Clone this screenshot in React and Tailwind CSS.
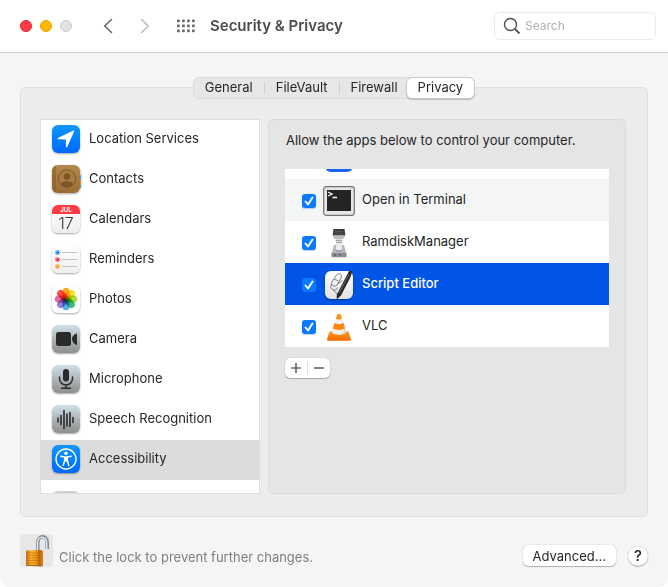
import React from "react";

const tile = "h-7 w-7 shrink-0 rounded-[6px] shadow-[0_1px_2px_rgba(0,0,0,0.35)]";
const blueTile = "bg-linear-to-b from-[#1496ff] to-[#0068ff]";
const grayTile = "bg-linear-to-b from-[#cfe0e8] to-[#8e8e8e]";

function LocationIcon() {
  return (
    <svg viewBox="0 0 28 28" className={`${tile} ${blueTile}`} aria-hidden="true">
      <path d="M22 6.700 15.300 21.800c-.4.900-1.400.8-1.400-.2l-.1-7.200-7.400-.2c-1-.1-1.100-1.100-.2-1.500L21 5.700c.7-.3 1.200.3 1 1Z" fill="#fff" />
    </svg>
  );
}

function ContactsIcon() {
  return (
    <svg viewBox="0 0 29 28" className="-mr-px h-7 w-[29px] shrink-0 drop-shadow-[0_1px_1px_rgba(0,0,0,0.35)]" aria-hidden="true">
      <defs>
        <linearGradient id="leather" x1="0" y1="0" x2="0" y2="1">
          <stop offset="0" stopColor="#b38a4c" />
          <stop offset="1" stopColor="#9c6b34" />
        </linearGradient>
      </defs>
      <rect x="24" y="5" width="5" height="5" rx="1" fill="#d9d9d9" />
      <rect x="24" y="10" width="5" height="5" fill="#27b4f0" />
      <rect x="24" y="15" width="5" height="4" fill="#ff8b17" />
      <rect x="24" y="19" width="5" height="4" rx="1" fill="#26c759" />
      <rect width="28" height="28" rx="6" fill="url(#leather)" />
      <path d="M4 .4A6 6 0 0 0 0 6v16a6 6 0 0 0 4 5.600Z" fill="#7a4e20" opacity=".4" />
      <circle cx="15" cy="13.500" r="8.700" fill="#a97b40" stroke="#7c5427" strokeWidth=".9" />
      <circle cx="15" cy="11.500" r="3.300" fill="#7c5427" />
      <path d="M8.600 19.400c1-2.300 3.500-3.200 6.400-3.200s5.400.9 6.400 3.200a8.700 8.700 0 0 1-12.800 0Z" fill="#7c5427" />
    </svg>
  );
}

function CalendarIcon() {
  return (
    <span className={`${tile} flex flex-col items-center overflow-hidden bg-linear-to-b from-white to-[#eeeeee]`} aria-hidden="true">
      <span className="h-[9px] w-full bg-[#fb3c44] text-center text-[6px] leading-[9px] font-bold text-white">JUL</span>
      <span className="text-[16px] leading-[19px] font-light text-[#333]">17</span>
    </span>
  );
}

function RemindersIcon() {
  const rows = [["#0a7cf5", 7.5], ["#f9223c", 14.5], ["#fb9712", 21.5]];
  return (
    <svg viewBox="0 0 28 28" className={`${tile} bg-linear-to-b from-white to-[#f1efed]`} aria-hidden="true">
      {rows.map(([color, y]) => (
        <g key={color}>
          <circle cx="5.500" cy={y} r="1.500" fill={color} />
          <circle cx="5.500" cy={y} r="2.300" fill="none" stroke={color} strokeWidth=".8" opacity=".6" />
          <path d={`M10 ${y}h15`} stroke="#c4c4c4" strokeWidth="1" />
        </g>
      ))}
    </svg>
  );
}

function PhotosIcon() {
  const petals = ["#fb9a0a", "#f5e100", "#a8d51c", "#27b673", "#3fa4e8", "#8f6fc8", "#dd5ba0", "#fb3b30"];
  return (
    <svg viewBox="0 0 28 28" className={`${tile} bg-white`} aria-hidden="true">
      {petals.map((color, i) => (
        <rect key={color} x="10.500" y="2.800" width="7" height="11.200" rx="3.500" fill={color} opacity=".9" transform={`rotate(${i * 45} 14 14)`} className="mix-blend-multiply" />
      ))}
    </svg>
  );
}

function CameraIcon() {
  return (
    <svg viewBox="0 0 28 28" className={`${tile} ${grayTile}`} aria-hidden="true">
      <rect x="4" y="7" width="15" height="14" rx="2.500" fill="#2b2b2b" />
      <path d="M20 14c0-2.500 2.200-5 5-5.500v11.500c-2.800-.5-5-3.500-5-6Z" fill="#2b2b2b" />
    </svg>
  );
}

function MicrophoneIcon() {
  return (
    <svg viewBox="0 0 28 28" className={`${tile} ${grayTile}`} aria-hidden="true">
      <rect x="11" y="4" width="6" height="12.500" rx="3" fill="#2b2b2b" />
      <path d="M7.500 12v1.500a6.500 6.500 0 0 0 13 0V12M14 20v3M9.500 23.300h9" fill="none" stroke="#2b2b2b" strokeWidth="1.500" strokeLinecap="round" />
    </svg>
  );
}

function SpeechIcon() {
  return (
    <svg viewBox="0 0 28 28" className={`${tile} ${grayTile}`} aria-hidden="true">
      <path d="M6 13v4M9 10.500v9M12 5.500v18M15 9v12M18 7.500v14M21 12.500v5" stroke="#2b2b2b" strokeWidth="1.600" strokeLinecap="round" />
    </svg>
  );
}

function AccessibilityIcon() {
  return (
    <svg viewBox="0 0 28 28" className={`${tile} ${blueTile}`} aria-hidden="true">
      <circle cx="14" cy="14" r="10" fill="none" stroke="#fff" strokeWidth="1.400" />
      <circle cx="14" cy="8.300" r="1.700" fill="#fff" />
      <path d="M8.800 11.300 12.700 12v3.200L11.200 20.500M19.200 11.300l-3.900.7v3.200l1.500 5.300" fill="none" stroke="#fff" strokeWidth="1.500" strokeLinecap="round" strokeLinejoin="round" />
      <path d="M12.200 11.600h3.600v4.800h-3.600Z" fill="#fff" />
    </svg>
  );
}

function TerminalIcon() {
  return (
    <svg viewBox="0 0 32 30" className="h-[30px] w-8" aria-hidden="true">
      <rect x=".7" y=".7" width="30.600" height="28.600" rx="2.500" fill="#e6e8e7" stroke="#707472" strokeWidth="1.200" />
      <rect x="4" y="4" width="24" height="21" fill="#242424" />
      <path d="m5 6 4 2-4 2M9.500 11.500H14" fill="none" stroke="#fff" strokeWidth="1.300" />
    </svg>
  );
}

function RamdiskIcon() {
  return (
    <svg viewBox="0 0 16 30" className="h-[30px] w-4" aria-hidden="true">
      <path d="M2.500 1h11l.9 6.500H1.600Z" fill="#3a3b3d" />
      <path d="M4 3.500h8M3.700 5.300h8.600" stroke="#66686a" strokeWidth=".7" />
      <path d="M1.600 7.500h12.800L12.500 11h-9Z" fill="#bcbcc0" />
      <path d="M5 11h6v5H5Z" fill="#dcdcdf" />
      <path d="M4.800 12.500h6.400M5 14.500h6" stroke="#98989e" strokeWidth=".8" />
      <path d="M3 17h10l2.500 9H.5Z" fill="#b5b5bb" />
      <path d="M5.500 15h5l1 7.500h-7Z" fill="#ececf0" />
      <path d="M4.500 21.500q3.500 3.500 7 0" fill="none" stroke="#85858e" strokeWidth="1" />
      <rect x=".5" y="25" width="15" height="4.200" rx=".6" fill="#8d8d94" />
      <path d="M3 27h2M8 27h2" stroke="#4a4a55" strokeWidth="1.200" />
    </svg>
  );
}

function ScriptEditorIcon() {
  return (
    <svg viewBox="0 0 28 28" className={`${tile} overflow-visible bg-linear-to-b from-white to-[#e2e2e2]`} aria-hidden="true">
      <path d="M11.500 4q1.500-2 4-1 1.500 1.500.5 4l-4 7q-1 1.500-3 1l-2-1q-1.500-1 0-3ZM9 8l4.500 2M7 13l-1.200 2q-.8 2.500 2 3.500l2 .5q2.200 0 2.700-2.500M12.500 13l5-3.500M8 19l4 3.500" fill="none" stroke="#666" strokeWidth=".8" />
      <path d="m23.300 1.600 2-2 2 1L25.500 6 16 24.500 11.700 28.600 11.800 23.500Z" fill="#25282a" />
      <path d="m24 3.500-10 18.500" stroke="#7d8184" strokeWidth=".8" />
    </svg>
  );
}

function VlcIcon() {
  return (
    <svg viewBox="0 0 28 32" className="h-[30px] w-[26px]" aria-hidden="true">
      <defs>
        <linearGradient id="cone" x1="0" y1="0" x2="0" y2="1">
          <stop offset="0" stopColor="#ff9a1c" />
          <stop offset="1" stopColor="#f56a00" />
        </linearGradient>
      </defs>
      <path d="M5 20.500h18q1 0 1.400 1l2.500 8q.3 1.200-1 1.200H2q-1.300 0-1-1.200l2.600-8q.4-1 1.400-1Z" fill="url(#cone)" />
      <path d="M12 3q2-2.500 4 0l6 18.500q-1.500 3-8 3t-8-3Z" fill="#f0f0f0" />
      <path d="M12 3q2-2.500 4 0l1.300 4q-3.300 1.600-6.600 0Z" fill="#ff920f" />
      <path d="M9.200 11.800q4.800 2.400 9.600 0l1.900 5.700q-6.700 3.200-13.400 0Z" fill="#ff8706" />
      <path d="M17 7.500 22 21.500q-1.500 3-8 3 5-1 5-4Z" fill="#a9b4bb" opacity=".35" />
    </svg>
  );
}

function LockIcon() {
  return (
    <svg viewBox="0 0 33 33" className="h-[33px] w-[33px]" aria-hidden="true">
      <defs>
        <linearGradient id="brass" x1="0" y1="0" x2="1" y2="0">
          <stop offset="0" stopColor="#c76f0e" />
          <stop offset=".3" stopColor="#ffb52e" />
          <stop offset=".68" stopColor="#e98c0b" />
          <stop offset=".74" stopColor="#b86408" />
          <stop offset="1" stopColor="#dc8410" />
        </linearGradient>
      </defs>
      <path d="M17.800 17V9c0-8 9.400-8.500 9.400 0v6" fill="none" stroke="#7f8d99" strokeWidth="3.600" />
      <path d="M17.500 17V9c0-7.500 9.200-8 9.200 0v6" fill="none" stroke="#dfe7ed" strokeWidth="1.500" />
      <path d="M6 16.500 21 16l2 1v13.500L21 32 6 31.500Z" fill="url(#brass)" />
      <path d="M6 19h15M6 21.500h15M6 24h15M6 26.500h15M6 29h15" stroke="#a85d07" strokeWidth=".7" opacity=".65" />
      <path d="M6 31.200 21 32l2-1.200" fill="none" stroke="#8e4705" strokeWidth=".8" />
    </svg>
  );
}

const categories = [
  ["Location Services", LocationIcon],
  ["Contacts", ContactsIcon],
  ["Calendars", CalendarIcon],
  ["Reminders", RemindersIcon],
  ["Photos", PhotosIcon],
  ["Camera", CameraIcon],
  ["Microphone", MicrophoneIcon],
  ["Speech Recognition", SpeechIcon],
  ["Accessibility", AccessibilityIcon],
];

const apps = [
  ["Open in Terminal", TerminalIcon, "bg-[#f4f5f5]"],
  ["RamdiskManager", RamdiskIcon, "bg-white"],
  ["Script Editor", ScriptEditorIcon, "bg-[#0054e6] font-medium text-white"],
  ["VLC", VlcIcon, "bg-white"],
];

function AppRow({ name, Icon, style }) {
  return (
    <li className={style}>
      <label className="flex h-[42px] items-center pt-0.5 pl-[17px]">
        <span className="grid h-3.5 w-3.5 shrink-0 place-items-center">
          <input type="checkbox" defaultChecked className="peer col-start-1 row-start-1 h-3.5 w-3.5 appearance-none rounded-[3px] border border-[#bbb] bg-white shadow-[0_1px_1px_rgba(0,80,220,0.25)] checked:border-0 checked:bg-[#0a7aff]" />
          <svg viewBox="0 0 14 14" className="pointer-events-none z-10 col-start-1 row-start-1 hidden h-3.5 w-3.5 peer-checked:block" aria-hidden="true">
            <path d="m3.500 7.500 2.500 3 4.500-7" fill="none" stroke="#fff" strokeWidth="1.900" strokeLinecap="round" strokeLinejoin="round" />
          </svg>
        </span>
        <span className="ml-[5px] flex w-9 shrink-0 justify-center">
          <Icon />
        </span>
        <span className="ml-[5px] pb-1">{name}</span>
      </label>
    </li>
  );
}

function Tab({ children, divided }) {
  return (
    <button type="button" role="tab" aria-selected="false" className="flex h-full items-center">
      <span className="px-[11px] pb-0.5">{children}</span>
      <span className={divided ? "h-3 w-px bg-[#cfcfcf]" : "h-3 w-px"} />
    </button>
  );
}

export default function App() {
  return (
    <div className="min-h-screen bg-white font-['Inter','Liberation_Sans',sans-serif] text-[13px] leading-4 text-[#262626]">
      <div className="flex min-h-screen flex-col overflow-hidden rounded-b-[10px] bg-[#f5f5f5]">
        <header className="flex h-[53px] items-center border-b border-[#cccccc] bg-white pr-3 pl-5">
          <div className="flex gap-2">
            <button type="button" aria-label="Close" className="h-3 w-3 rounded-full border border-[#e8202c] bg-[#ff3b47]" />
            <button type="button" aria-label="Minimize" className="h-3 w-3 rounded-full border border-[#e5a100] bg-[#ffb900]" />
            <button type="button" aria-label="Zoom" disabled className="h-3 w-3 rounded-full border border-[#cccccc] bg-[#e3e3e3]" />
          </div>
          <button type="button" aria-label="Back" className="ml-7">
            <svg viewBox="0 0 16 16" className="h-4 w-4" fill="none" stroke="#6b6b6b" strokeWidth="1.600" strokeLinecap="round" strokeLinejoin="round">
              <path d="M11.500 1.500 4.700 8l6.800 6.500" />
            </svg>
          </button>
          <button type="button" aria-label="Forward" disabled className="ml-5">
            <svg viewBox="0 0 16 16" className="h-4 w-4" fill="none" stroke="#bdbdbd" strokeWidth="1.600" strokeLinecap="round" strokeLinejoin="round">
              <path d="M5.500 1.500 12.300 8l-6.800 6.500" />
            </svg>
          </button>
          <button type="button" aria-label="Show All" className="ml-[25px]">
            <svg viewBox="0 0 18 14" className="h-3.5 w-[18px]" fill="#6e6e6e">
              {[0, 5, 10, 15].map((x) => [0.5, 5.5, 10.5].map((y) => <rect key={`${x}-${y}`} x={x} y={y} width="2.800" height="2.800" rx=".7" />))}
            </svg>
          </button>
          <h1 className="ml-[15px] flex-1 text-[15px] leading-5 font-semibold text-[#4c4c4c]">Security &amp; Privacy</h1>
          <label className="flex h-7 w-[162px] items-center rounded-[6px] border border-[#ebebeb] pl-2">
            <svg viewBox="0 0 18 18" className="h-[18px] w-[18px] shrink-0" fill="none" stroke="#4f4f4f" strokeWidth="1.400" aria-hidden="true">
              <circle cx="7.500" cy="7.500" r="6" />
              <path d="m12 12 4.500 4.500" strokeWidth="1.800" />
            </svg>
            <input type="search" aria-label="Search" placeholder="Search" className="ml-1 min-w-0 flex-1 bg-transparent text-[12px] outline-none placeholder:text-[#b0b0b0]" />
          </label>
        </header>

        <main className="flex flex-1 flex-col px-5 pt-6 pb-5">
          <div role="tablist" className="relative z-10 flex h-[22px] self-center rounded-[6px] border border-[#dcdcdc] bg-[#e7e7e7]">
            <Tab divided>General</Tab>
            <Tab divided>FileVault</Tab>
            <Tab>Firewall</Tab>
            <button type="button" role="tab" aria-selected="true" className="-my-px -mr-px -ml-1 rounded-[6px] border border-[#c9c9c9] bg-white px-[11px] pb-0.5 shadow-[0_1px_1px_rgba(0,0,0,0.2)]">Privacy</button>
          </div>

          <div className="-mt-3 flex gap-2 rounded-[5px] border border-[#e0e0e0] bg-[#ececec] pt-[31px] pr-[21px] pb-[22px] pl-[19px]">
            <nav aria-label="Privacy categories" className="h-[375px] w-[220px] shrink-0 overflow-hidden border border-[#dfdfdf] bg-white">
              <ul>
                {categories.map(([name, Icon]) => (
                  <li key={name}>
                    <button type="button" className={name === "Accessibility" ? "flex h-10 w-full items-center gap-[9px] bg-[#dcdcdc] pb-0.5 pl-[11px] text-left" : "flex h-10 w-full items-center gap-[9px] pb-0.5 pl-[11px] text-left"}>
                      <Icon />
                      <span className="pb-0.5">{name}</span>
                    </button>
                  </li>
                ))}
                <li className="flex h-10 pt-[11px] pl-[11px]">
                  <span className="h-7 w-7 rounded-[6px] bg-[#cfcfcf]" />
                </li>
              </ul>
            </nav>

            <section className="flex-1 rounded-[5px] border border-[#dadada] bg-[#e5e5e5] px-4 pt-3">
              <p className="px-px leading-[17px]">Allow the apps below to control your computer.</p>
              <ul className="mt-5 flex h-[178px] flex-col justify-end overflow-hidden bg-white">
                <li className="flex h-[42px] shrink-0 items-center pl-10">
                  <span className="h-7 w-7 rounded-[6px] bg-[#1764f5]" />
                </li>
                {apps.map(([name, Icon, style]) => (
                  <AppRow key={name} name={name} Icon={Icon} style={style} />
                ))}
              </ul>
              <div className="mt-[11px] flex h-5 w-[45px] items-center rounded-[5px] bg-white shadow-[0_0_1px_rgba(0,0,0,0.3),0_1px_1px_rgba(0,0,0,0.25)]">
                <button type="button" aria-label="Add" className="flex flex-1 justify-center">
                  <svg viewBox="0 0 10 10" className="h-2.5 w-2.5" stroke="#333" strokeWidth="1.200"><path d="M5 0v10M0 5h10" /></svg>
                </button>
                <span className="h-3 w-px bg-[#dddddd]" />
                <button type="button" aria-label="Remove" className="flex flex-1 justify-center">
                  <svg viewBox="0 0 10 10" className="h-2.5 w-2.5" stroke="#333" strokeWidth="1.200"><path d="M0 5h10" /></svg>
                </button>
              </div>
            </section>
          </div>

          <footer className="mt-[17px] flex items-center">
            <button type="button" aria-label="Lock" className="rounded-[4px] bg-[#e7e7e7]"><LockIcon /></button>
            <p className="ml-1.5 flex-1 pt-3 text-[#808080]">Click the lock to prevent further changes.</p>
            <button type="button" className="mt-2.5 h-[21px] rounded-[5px] bg-white px-2.5 shadow-[0_0_1px_rgba(0,0,0,0.35),0_1px_1px_rgba(0,0,0,0.25)]">Advanced...</button>
            <button type="button" aria-label="Help" className="mt-2.5 ml-3 h-5 w-5 rounded-full bg-white text-[15px] font-medium shadow-[0_0_1px_rgba(0,0,0,0.35),0_1px_1px_rgba(0,0,0,0.25)]">?</button>
          </footer>
        </main>
      </div>
    </div>
  );
}
